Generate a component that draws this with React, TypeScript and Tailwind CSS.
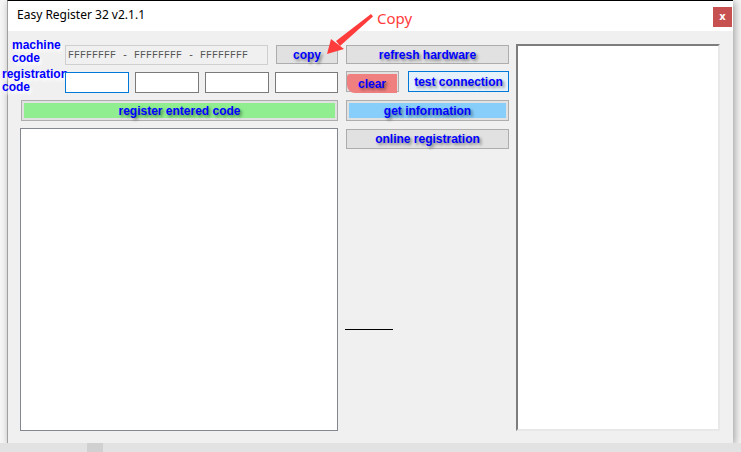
import React from "react";

const btnText =
  "font-['Liberation_Sans',Arial,sans-serif] font-bold text-[12px] text-[#0000ff] [text-shadow:2px_2px_3px_rgba(0,0,0,0.45)] whitespace-nowrap";
const labelText =
  "font-['Liberation_Sans',Arial,sans-serif] font-bold text-[12px] leading-[13px] text-[#0000ff] [text-shadow:2px_3px_3px_#ffffff] whitespace-nowrap";

function GrayButton({ label, className = "" }: { label: string; className?: string }) {
  return (
    <div
      className={`flex items-center justify-center border border-[#adadad] bg-[#e1e1e1] ${className}`}
    >
      <span className={btnText}>{label}</span>
    </div>
  );
}

function FillButton({
  label,
  fill,
  className = "",
}: {
  label: string;
  fill: string;
  className?: string;
}) {
  return (
    <div className={`border border-[#adadad] bg-[#e1e1e1] p-[2px] ${className}`}>
      <div className={`flex h-full items-center justify-center ${fill}`}>
        <span className={btnText}>{label}</span>
      </div>
    </div>
  );
}

export default function App() {
  return (
    <div className="relative h-[452px] w-[741px] overflow-hidden bg-[#f6f6f6]">
      {/* window */}
      <div className="ml-[7px] flex h-[443px] w-[726px] flex-col border-l border-t border-l-[#a0a0a0] border-t-black bg-[#f0f0f0] shadow-[2px_2px_8px_rgba(0,0,0,0.35)]">
        {/* title bar */}
        <div className="flex h-[30px] shrink-0 items-start justify-between bg-white">
          <span className="mt-[6px] ml-[9px] font-['Noto_Sans',sans-serif] text-[12px] leading-[16px] text-black">
            Easy Register 32 v2.1.1
          </span>
          <div className="mt-[6px] mr-px flex h-[20px] w-[19px] items-center justify-center bg-[#c75050]">
            <span className="font-['DejaVu_Sans',sans-serif] text-[10px] font-bold leading-none text-white">
              x
            </span>
          </div>
        </div>

        {/* body */}
        <div className="flex flex-1">
          {/* left column */}
          <div className="flex w-[330px] flex-col">
            <div className="mt-[14px] flex h-[20px] items-start">
              <div className="w-[57px]">
                <div className={`-mt-[6px] pl-[4px] ${labelText}`}>
                  <div>machine</div>
                  <div>code</div>
                </div>
              </div>
              <div className="flex h-[20px] w-[203px] items-center border border-[#cfcfcf] bg-[#f0f0f0] pl-[2px]">
                <span className="font-['Liberation_Mono',monospace] text-[10px] text-[#555555] whitespace-pre">
                  FFFFFFFF - FFFFFFFF - FFFFFFFF
                </span>
              </div>
              <div className="ml-[8px] flex h-[19px] w-[62px] items-center justify-center border border-[#adadad] bg-[#e1e1e1]">
                <span className={`${btnText} [text-shadow:2px_2px_3px_#ffffff]`}>copy</span>
              </div>
            </div>

            <div className="mt-[7px] flex h-[21px] items-start">
              <div className="w-[57px]">
                <div className={`-mt-[4px] -ml-[6px] ${labelText}`}>
                  <div>registration</div>
                  <div>code</div>
                </div>
              </div>
              <div className="h-[21px] w-[64px] border border-[#0078d7] bg-white" />
              <div className="ml-[6px] h-[21px] w-[64px] border border-[#7a7a7a] bg-white" />
              <div className="ml-[6px] h-[21px] w-[64px] border border-[#7a7a7a] bg-white" />
              <div className="ml-[6px] h-[21px] w-[63px] border border-[#7a7a7a] bg-white" />
            </div>

            <FillButton
              label="register entered code"
              fill="bg-[#90ee90]"
              className="mt-[7px] ml-[13px] h-[21px] w-[317px]"
            />

            <div className="mt-[7px] ml-[12px] h-[303px] w-[318px] border border-[#828790] bg-white" />
          </div>

          {/* middle column */}
          <div className="ml-[8px] flex w-[163px] flex-col">
            <GrayButton label="refresh hardware" className="mt-[14px] h-[19px]" />

            <div className="mt-[7px] flex h-[21px] gap-[9px]">
              <div className="h-[21px] w-[53px] border border-[#adadad] bg-[#e1e1e1] pt-[2px] pr-[1px]">
                <div className="flex h-[19px] items-center justify-center rounded-bl-[8px] rounded-tl-[3px] bg-[#f08080]">
                  <span className={btnText}>clear</span>
                </div>
              </div>
              <div className="flex h-[21px] w-[101px] items-center justify-center border border-[#0078d7] bg-[#e5f1fb]">
                <span className={btnText}>test connection</span>
              </div>
            </div>

            <FillButton label="get information" fill="bg-[#87cefa]" className="mt-[8px] h-[21px]" />

            <GrayButton label="online registration" className="mt-[8px] h-[20px]" />

            <div className="mt-[180px] -ml-px h-px w-[48px] bg-black" />
          </div>

          {/* right column */}
          <div className="mt-[13px] ml-[7px] h-[387px] w-[204px] border-2 border-t-[#7d7d7d] border-l-[#7d7d7d] border-r-[#e8e8e8] border-b-[#e8e8e8] bg-white" />
        </div>
      </div>

      {/* strip below the window */}
      <div className="flex h-[9px] bg-[#e2e2e2]">
        <div className="ml-[87px] h-full w-[16px] bg-[#d0d0d0]" />
      </div>

      {/* annotation */}
      <span className="pointer-events-none absolute top-[8px] left-[377px] font-['Noto_Sans',sans-serif] text-[15px] leading-[20px] text-[#ff3b3b]">
        Copy
      </span>
      <svg
        className="pointer-events-none absolute top-0 left-0"
        width="741"
        height="452"
        viewBox="0 0 741 452"
      >
        <polygon points="371,14 373,16.5 340,46 336,41" fill="#ff3b3b" />
        <polygon points="327,54 331,39 344,49" fill="#ff3b3b" />
      </svg>
    </div>
  );
}
